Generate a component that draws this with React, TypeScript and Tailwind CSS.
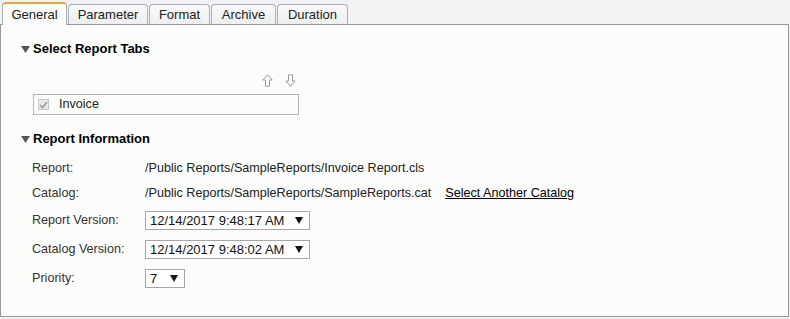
import React from 'react'

const tabs = [
  { name: 'General', w: 'w-[65px]' },
  { name: 'Parameter', w: 'w-[80px]' },
  { name: 'Format', w: 'w-[61px]' },
  { name: 'Archive', w: 'w-[65px]' },
  { name: 'Duration', w: 'w-[71px]' },
]

const Caret: React.FC = () => (
  <svg width="9" height="7" viewBox="0 0 9 7" className="mr-[3px]">
    <path d="M0 0 H9 L4.5 7 Z" fill="#555" />
  </svg>
)

const Arrow: React.FC<{ down?: boolean }> = ({ down }) => (
  <svg width="11" height="13" viewBox="0 0 11 13" style={{ transform: down ? 'rotate(180deg)' : undefined }}>
    <path d="M5.5 0.8 L10.2 6 H7.5 V12.2 H3.5 V6 H0.8 Z" fill="none" stroke="#999" strokeWidth="1" />
  </svg>
)

const Select: React.FC<{ value: string; width: string }> = ({ value, width }) => (
  <div className={`flex items-center justify-between h-[19px] border border-[#a6a6a6] bg-white pl-[4px] pr-[6px] text-[13px] text-[#111] whitespace-nowrap ${width}`}>
    <span>{value}</span>
    <svg width="8" height="7" viewBox="0 0 8 7">
      <path d="M0 0 H8 L4 7 Z" fill="#111" />
    </svg>
  </div>
)

const Row: React.FC<{ label: string; children: React.ReactNode; h: string }> = ({ label, children, h }) => (
  <div className={`flex items-center whitespace-nowrap ${h}`}>
    <div className="w-[113px] text-[#333]">{label}</div>
    {children}
  </div>
)

export default function App() {
  return (
    <div className="w-[790px] h-[319px] bg-[#f3f1f4] text-[12.6px] text-[#222]" style={{ fontFamily: '"Liberation Sans", Arial, sans-serif' }}>
      <div className="flex items-end h-[24px] pl-[2px] gap-[1px]">
        {tabs.map((t, i) => (
          <div
            key={t.name}
            className={
              i === 0
                ? `${t.w} h-[23px] flex items-center justify-center rounded-t-[4px] border border-b-0 border-[#a9b0b8] border-t-2 border-t-[#f0a830] bg-[#fbfdfa] text-[13px] text-[#222] relative top-[1px]`
                : `${t.w} h-[20px] flex items-center justify-center rounded-t-[4px] border border-b-0 border-[#a9b0b8] bg-gradient-to-b from-[#fafafa] to-[#eceeef] text-[13px] text-[#222]`
            }
          >
            {t.name}
          </div>
        ))}
      </div>
      <div className="w-[789px] h-[293px] border border-[#999] bg-[#fbfdfa] pl-[20px] pt-[15px]">
        <div className="flex items-center font-bold text-[13px] text-black h-[18px]">
          <Caret />
          Select Report Tabs
        </div>
        <div className="flex justify-end w-[275px] gap-[12px] mt-[16px] h-[15px]">
          <Arrow />
          <Arrow down />
        </div>
        <div className="ml-[12px] mt-[5px] w-[266px] h-[21px] border border-[#b5b5b5] flex items-center pl-[4px]">
          <div className="w-[11px] h-[11px] border border-[#c8c8c8] bg-[#e8e8e8] flex items-center justify-center">
            <svg width="9" height="8" viewBox="0 0 9 8">
              <path d="M1 4 L3.5 6.5 L8 1" fill="none" stroke="#9a9a9a" strokeWidth="1.6" />
            </svg>
          </div>
          <span className="ml-[10px] text-[#222]">Invoice</span>
        </div>
        <div className="flex items-center font-bold text-[13px] text-black h-[18px] mt-[15px]">
          <Caret />
          Report Information
        </div>
        <div className="ml-[11px] mt-[8px] flex flex-col">
          <Row label="Report:" h="h-[25px]">
            <span>/Public Reports/SampleReports/Invoice Report.cls</span>
          </Row>
          <Row label="Catalog:" h="h-[25px]">
            <span>/Public Reports/SampleReports/SampleReports.cat</span>
            <span className="ml-[14px] underline text-black">Select Another Catalog</span>
          </Row>
          <Row label="Report Version:" h="h-[29px]">
            <Select value="12/14/2017 9:48:17 AM" width="w-[165px]" />
          </Row>
          <Row label="Catalog Version:" h="h-[29px]">
            <Select value="12/14/2017 9:48:02 AM" width="w-[165px]" />
          </Row>
          <Row label="Priority:" h="h-[29px]">
            <Select value="7" width="w-[40px]" />
          </Row>
        </div>
      </div>
    </div>
  )
}
